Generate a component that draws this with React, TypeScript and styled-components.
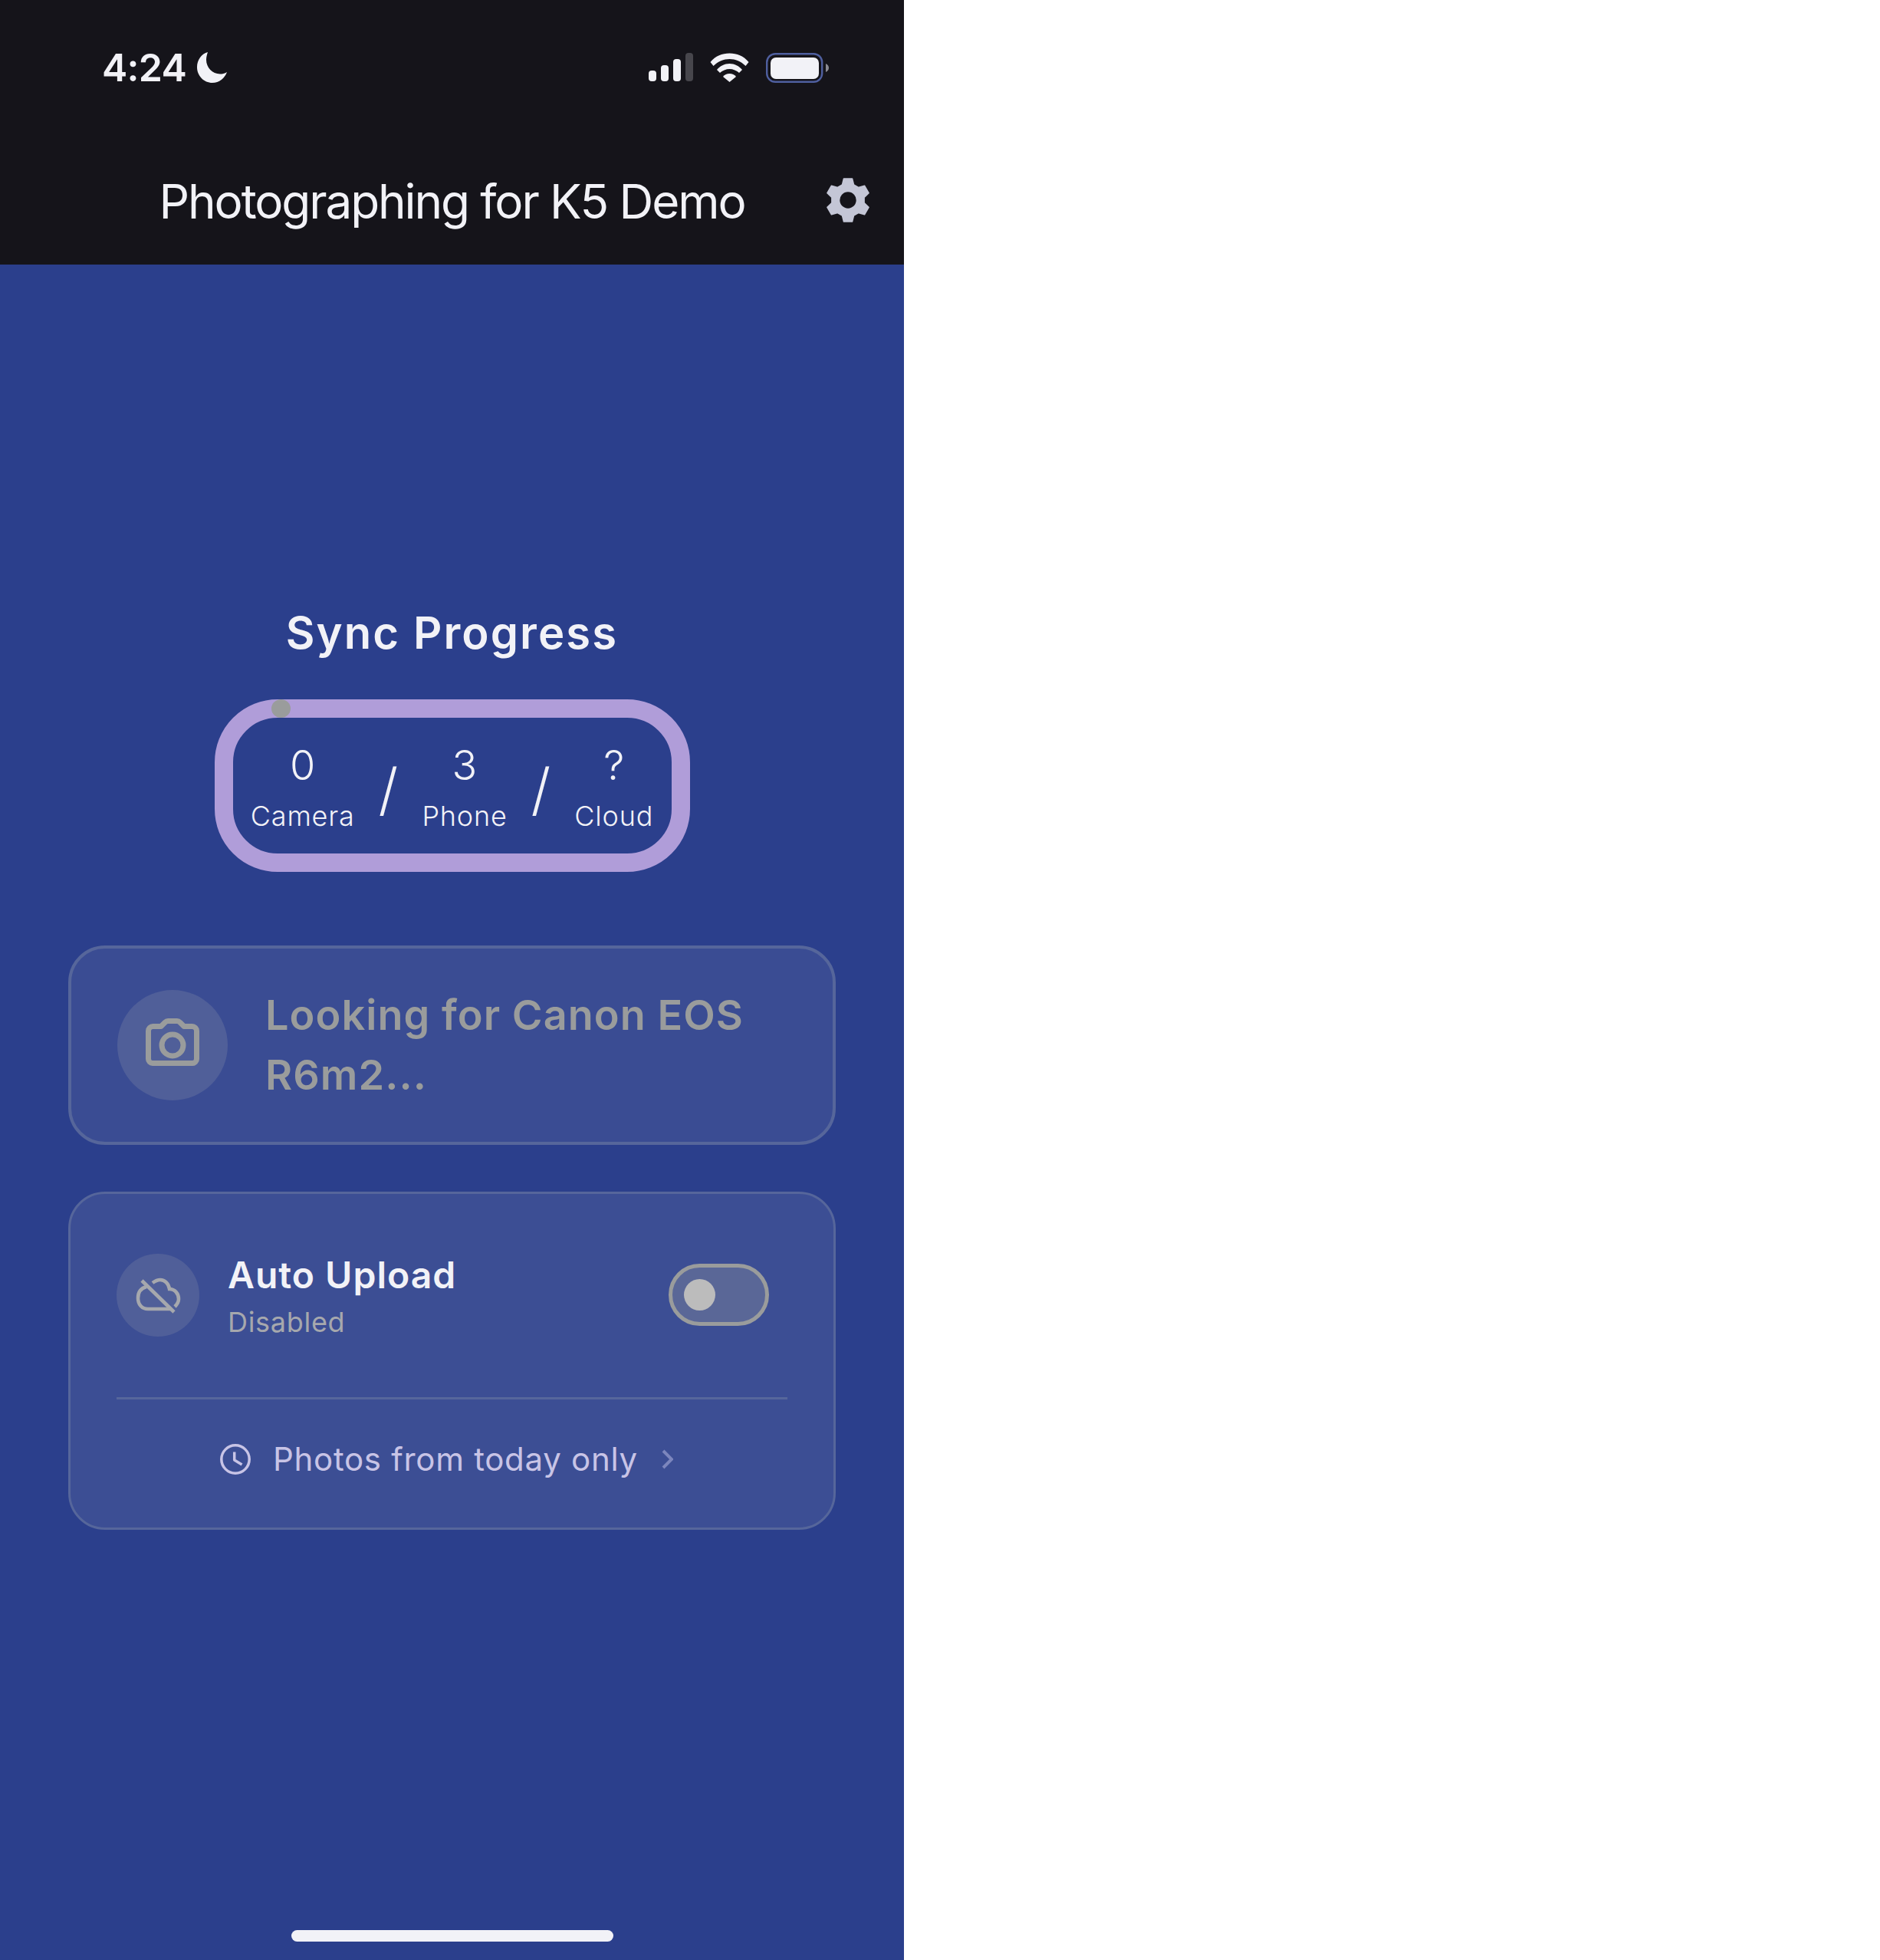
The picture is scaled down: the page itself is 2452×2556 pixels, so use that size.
import React from "react";
import styled, { createGlobalStyle } from "styled-components";

const Global = createGlobalStyle`
  html, body { margin: 0; padding: 0; background: #ffffff; }
  body { font-family: Inter, "Noto Sans", sans-serif; -webkit-font-smoothing: antialiased; }
`;

const Screen = styled.div`
  width: 1179px;
  height: 2556px;
  background: #2b3f8c;
  display: flex;
  flex-direction: column;
  align-items: center;
`;

const Header = styled.header`
  width: 100%;
  height: 345px;
  box-sizing: border-box;
  background: #15141a;
  padding-top: 68px;
  display: flex;
  flex-direction: column;
`;

const StatusBar = styled.div`
  height: 40px;
  padding: 0 98px 0 133px;
  display: flex;
  justify-content: space-between;
  align-items: center;
`;

const TimeGroup = styled.div`
  display: flex;
  align-items: center;
  gap: 14px;
`;

const Time = styled.span`
  font-size: 50px;
  line-height: 40px;
  font-weight: 600;
  letter-spacing: -0.7px;
  color: #f2f2f7;
`;

const StatusIcons = styled.div`
  display: flex;
  align-items: center;
  gap: 22px;
`;

const TitleRow = styled.div`
  margin-top: 124px;
  height: 58px;
  padding: 0 44px;
  display: grid;
  grid-template-columns: 1fr auto 1fr;
  align-items: center;
`;

const HeaderTitle = styled.h1`
  grid-column: 2;
  margin: 3px 0 0;
  font-size: 62px;
  line-height: 54px;
  font-weight: 400;
  letter-spacing: -2.1px;
  color: #f2f2f7;
  white-space: nowrap;
`;

const GearWrap = styled.div`
  justify-self: end;
  display: flex;
`;

const SectionTitle = styled.h2`
  margin: 444px 0 0;
  font-size: 58px;
  line-height: 72px;
  font-weight: 600;
  letter-spacing: 2.1px;
  color: #f2f2f7;
`;

const Ring = styled.div`
  position: relative;
  margin-top: 51px;
  width: 620px;
  height: 225px;
  box-sizing: border-box;
  border: 24px solid #b09dd9;
  border-radius: 82px;
  display: flex;
  justify-content: center;
  align-items: center;
  gap: 31px;
`;

const RingDot = styled.span`
  position: absolute;
  left: 50px;
  top: -24px;
  width: 25px;
  height: 24px;
  border-radius: 50%;
  background: #9a9c9c;
`;

const Counter = styled.div`
  margin-top: 5px;
  display: flex;
  flex-direction: column;
  align-items: center;
  color: #f2f2f7;
  font-weight: 300;
`;

const CounterValue = styled.span`
  font-size: 54px;
  line-height: 66px;
`;

const CounterLabel = styled.span`
  margin-top: 8px;
  font-size: 36px;
  line-height: 50px;
  letter-spacing: 0.8px;
`;

const Slash = styled.span`
  font-size: 74px;
  line-height: 74px;
  font-weight: 300;
  color: #f2f2f7;
  margin-top: 8px;
`;

const Card = styled.section<{ $height: number; $fill: string; $gap: number; $line: number }>`
  width: 1001px;
  height: ${(p) => p.$height}px;
  margin-top: ${(p) => p.$gap}px;
  box-sizing: border-box;
  border: ${(p) => p.$line}px solid #56669b;
  border-radius: 48px;
  background: ${(p) => p.$fill};
`;

const SearchRow = styled.div`
  height: 100%;
  padding-left: 60px;
  display: flex;
  align-items: center;
  gap: 49px;
`;

const IconCircle = styled.div<{ $size: number }>`
  flex: none;
  width: ${(p) => p.$size}px;
  height: ${(p) => p.$size}px;
  border-radius: 50%;
  background: #505f99;
  display: flex;
  align-items: center;
  justify-content: center;
`;

const SearchText = styled.p`
  margin: 0;
  width: 660px;
  font-size: 54px;
  line-height: 78px;
  font-weight: 600;
  letter-spacing: 1.05px;
  color: #9a9c9c;
`;

const UploadRow = styled.div`
  height: 189px;
  padding: 78px 84px 0 60px;
  box-sizing: border-box;
  display: flex;
  align-items: flex-start;
`;

const UploadText = styled.div`
  margin-left: 37px;
  display: flex;
  flex-direction: column;
`;

const UploadTitle = styled.span`
  margin-top: -2px;
  font-size: 48px;
  line-height: 60px;
  font-weight: 600;
  letter-spacing: 1px;
  color: #f2f2f7;
`;

const UploadSub = styled.span`
  margin-top: 9px;
  font-size: 36px;
  line-height: 44px;
  font-weight: 400;
  letter-spacing: 0.7px;
  color: #a6a8ad;
`;

const Toggle = styled.div`
  margin-left: auto;
  margin-top: 13px;
  width: 131px;
  height: 81px;
  box-sizing: border-box;
  border: 5px solid #9a9c9c;
  border-radius: 41px;
  background: #5a6797;
  padding-left: 15px;
  display: flex;
  align-items: center;
`;

const Knob = styled.span`
  width: 41px;
  height: 41px;
  border-radius: 50%;
  background: #bcbcbc;
`;

const Divider = styled.hr`
  margin: 76px 60px 0 60px;
  border: 0;
  height: 3px;
  background: #56669b;
`;

const RangeRow = styled.div`
  margin-top: 58px;
  padding-left: 195px;
  display: flex;
  align-items: center;
  height: 40px;
`;

const RangeText = styled.span`
  margin-left: 29px;
  margin-right: 31px;
  font-size: 42px;
  line-height: 40px;
  font-weight: 400;
  letter-spacing: 0.7px;
  color: #c8c4e6;
  white-space: nowrap;
`;

const HomeIndicator = styled.div`
  margin-top: auto;
  margin-bottom: 24px;
  width: 420px;
  height: 15px;
  border-radius: 8px;
  background: #f2f2f7;
`;

const gearPath = (() => {
  const cx = 29;
  const cy = 29;
  const pts: string[] = [];
  for (let i = 0; i < 6; i++) {
    const a = (i * Math.PI) / 3;
    const p = (r: number, off: number) => {
      const t = a - Math.PI / 2;
      const x = cx + r * Math.cos(t) - off * Math.sin(t);
      const y = cy + r * Math.sin(t) + off * Math.cos(t);
      return `${x.toFixed(2)} ${y.toFixed(2)}`;
    };
    pts.push(p(20, -7.5), p(28, -5.5), p(28, 5.5), p(20, 7.5));
  }
  return `M${pts.join("L")}Z`;
})();

const Gear = () => (
  <svg width="58" height="58" viewBox="0 0 58 58">
    <path d={gearPath} fill="#c4c6d6" stroke="#c4c6d6" strokeWidth="1.6" strokeLinejoin="round" />
    <circle cx="29" cy="29" r="10.7" fill="#15141a" />
  </svg>
);

const Moon = () => (
  <svg width="39" height="40" viewBox="0 0 39 40">
    <path d="M14 0C6 2 0 10 0 19.5C0 31 9 40 20 40C29 40 36 34 39 26C36 28 33 28.5 30 28.5C20 28.5 12 20 12 10C12 6 13 3 14 0Z" fill="#f2f2f7" />
  </svg>
);

const Signal = () => (
  <svg width="58" height="38" viewBox="0 0 58 38">
    <rect x="0" y="23" width="10" height="14" rx="4" fill="#f2f2f7" />
    <rect x="16" y="16" width="10" height="21" rx="4" fill="#f2f2f7" />
    <rect x="32" y="8" width="10" height="29" rx="4" fill="#f2f2f7" />
    <rect x="48" y="0" width="10" height="37" rx="4" fill="#47464c" />
  </svg>
);

const Wifi = () => (
  <svg width="51" height="38" viewBox="0 0 51 38">
    <path d="M0.5 12C7 4 16 0.5 25.5 0.5C35 0.5 44 4 50.5 12L46.5 17C40.5 11 33 8 25.5 8C18 8 10.5 11 4.5 17Z" fill="#f2f2f7" />
    <path d="M9 22C13 17 19 14 25.5 14C32 14 38 17 42 22L38 26C35 23 30 21 25.5 21C21 21 16 23 13 26Z" fill="#f2f2f7" />
    <path d="M17 31C19 28.5 22 27 25.5 27C29 27 32 28.5 34 31L25.5 38Z" fill="#f2f2f7" />
  </svg>
);

const Battery = () => (
  <svg width="82" height="39" viewBox="0 0 82 39">
    <rect x="1.2" y="1.2" width="72" height="36.6" rx="11" fill="none" stroke="#4f5f9f" strokeWidth="2.4" />
    <rect x="6" y="6" width="63" height="28" rx="7" fill="#f2f2f7" />
    <path d="M78 14C80.5 15 82 17 82 19.5C82 22 80.5 24 78 25Z" fill="#8b8b93" />
  </svg>
);

const CameraIcon = () => (
  <svg width="70" height="70" viewBox="0 0 70 70" fill="none" stroke="#9a9c9c" strokeWidth="7" strokeLinejoin="round">
    <path d="M9.5 10.5H20L25 5.5Q27 3.5 29 3.5H41Q43 3.5 45 5.5L50 10.5H60.5A6 6 0 0 1 66.5 16.5V53A5.5 5.5 0 0 1 61 58.5H9A5.5 5.5 0 0 1 3.5 53V16.5A6 6 0 0 1 9.5 10.5Z" />
    <circle cx="35" cy="35" r="14" />
  </svg>
);

const CloudOff = () => (
  <svg width="70" height="50" viewBox="0 0 70 50" fill="none" stroke="#a6a8ad" strokeWidth="4.6" strokeLinecap="butt">
    <path d="M20 14C12 16 9 22 9 29C9 37 14 43 22 43H52" />
    <path d="M28 9C32 6 35 5 38 5C44 5 49 10 50 17C57 17 62 23 62 30C62 34 60 37 57 40" />
    <path d="M14 6L56 47" />
  </svg>
);

const ClockIcon = () => (
  <svg width="40" height="40" viewBox="0 0 40 40" fill="none" stroke="#c8c4e6" strokeWidth="3.5">
    <circle cx="20" cy="20" r="18.2" />
    <path d="M18.7 10.5V21L28.5 27" strokeLinejoin="round" />
  </svg>
);

const ChevronIcon = () => (
  <svg width="15" height="26" viewBox="0 0 15 26" fill="none" stroke="#7c86bd" strokeWidth="4">
    <path d="M2 2L13 13L2 24" />
  </svg>
);

export default function App() {
  return (
    <>
      <Global />
      <Screen>
        <Header>
          <StatusBar>
            <TimeGroup>
              <Time>4:24</Time>
              <Moon />
            </TimeGroup>
            <StatusIcons>
              <Signal />
              <Wifi />
              <Battery />
            </StatusIcons>
          </StatusBar>
          <TitleRow>
            <HeaderTitle>Photographing for K5 Demo</HeaderTitle>
            <GearWrap>
              <Gear />
            </GearWrap>
          </TitleRow>
        </Header>

        <SectionTitle>Sync Progress</SectionTitle>
        <Ring>
          <RingDot />
          <Counter>
            <CounterValue>0</CounterValue>
            <CounterLabel>Camera</CounterLabel>
          </Counter>
          <Slash>/</Slash>
          <Counter>
            <CounterValue>3</CounterValue>
            <CounterLabel>Phone</CounterLabel>
          </Counter>
          <Slash>/</Slash>
          <Counter>
            <CounterValue>?</CounterValue>
            <CounterLabel>Cloud</CounterLabel>
          </Counter>
        </Ring>

        <Card $height={260} $fill="#3a4c93" $gap={96} $line={4}>
          <SearchRow>
            <IconCircle $size={144}>
              <CameraIcon />
            </IconCircle>
            <SearchText>Looking for Canon EOS R6m2...</SearchText>
          </SearchRow>
        </Card>

        <Card $height={441} $fill="#3c4e94" $gap={61} $line={3}>
          <UploadRow>
            <IconCircle $size={108}>
              <CloudOff />
            </IconCircle>
            <UploadText>
              <UploadTitle>Auto Upload</UploadTitle>
              <UploadSub>Disabled</UploadSub>
            </UploadText>
            <Toggle>
              <Knob />
            </Toggle>
          </UploadRow>
          <Divider />
          <RangeRow>
            <ClockIcon />
            <RangeText>Photos from today only</RangeText>
            <ChevronIcon />
          </RangeRow>
        </Card>

        <HomeIndicator />
      </Screen>
    </>
  );
}
